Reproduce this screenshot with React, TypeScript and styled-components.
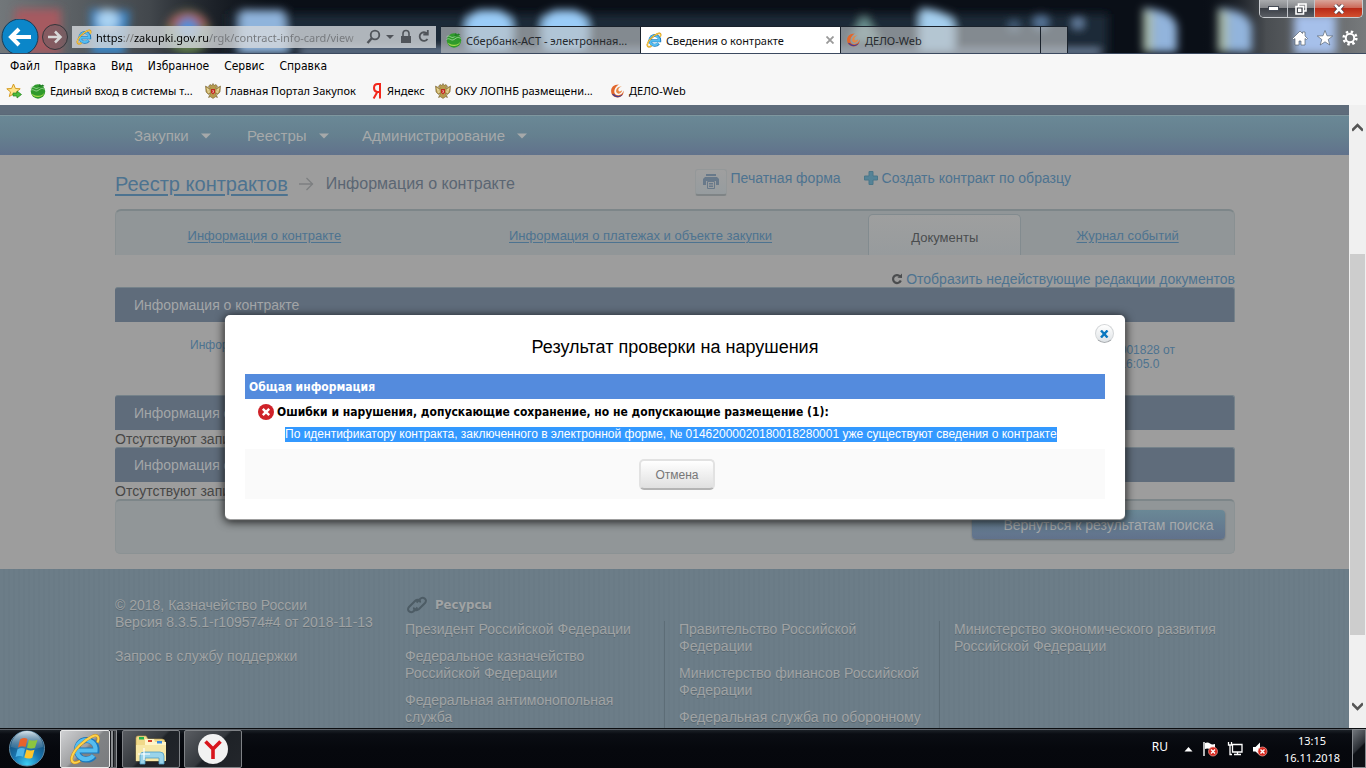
import React from "react";
import styled, { createGlobalStyle } from "styled-components";

const ui = `"Noto Sans", "Open Sans", sans-serif`;
const page = `"Liberation Sans", Arial, sans-serif`;
const bold = `"DejaVu Sans Condensed", "DejaVu Sans", sans-serif`;
const link = "#4d7390";

const Global = createGlobalStyle`
  *, *::before, *::after { box-sizing: border-box; }
  body { margin: 0; overflow: hidden; }
  button { font-family: inherit; border: 0; padding: 0; background: none; cursor: pointer; }
  svg { display: block; flex: none; }
  h1, h2, h3, p, ul { margin: 0; padding: 0; font-weight: normal; list-style: none; }
`;

const Desktop = styled.div`
  height: 100vh;
  display: flex;
  flex-direction: column;
  overflow: hidden;
  font-family: ${ui};
`;

/* ---------- browser frame ---------- */
const TitleBar = styled.header`
  position: relative;
  height: 54px;
  flex: none;
  display: flex;
  align-items: flex-end;
  background: #0a0f17;
  border-bottom: 1px solid #3c4a60;
  overflow: hidden;
`;
const Wallpaper = styled.svg`
  position: absolute;
  inset: 0;
  width: 100%;
  height: 54px;
`;
const NavButtons = styled.div`
  position: relative;
  display: flex;
  align-items: center;
  gap: 2px;
  width: 72px;
  height: 34px;
  padding-left: 1px;
`;
const AddressBar = styled.div`
  position: relative;
  display: flex;
  align-items: center;
  gap: 4px;
  width: 364px;
  height: 22px;
  margin: 0 5px 5px 0;
  padding: 0 4px;
  background: rgba(212, 216, 220, 0.8);
  color: #50545a;
`;
const Url = styled.input`
  flex: 1;
  min-width: 0;
  height: 20px;
  padding: 0;
  border: 0;
  outline: 0;
  font: 11px ${ui};
  color: transparent;
  background: linear-gradient(90deg, #000 27px, #777 27px 38px, #000 38px 112px, #74777b 112px 250px, #a0a3a6 270px);
  background-clip: text;
  -webkit-background-clip: text;
`;
const TabStrip = styled.div`
  position: relative;
  display: flex;
  height: 27px;
  flex: 1;
`;
const BrowserTab = styled.button<{ $active?: boolean }>`
  display: flex;
  align-items: center;
  gap: 4px;
  width: 200px;
  height: 27px;
  padding: 0 6px 0 5px;
  font: 11px ${ui};
  white-space: nowrap;
  text-align: left;
  color: ${(p) => (p.$active ? "#111" : "#26292d")};
  background: ${(p) => (p.$active ? "#fff" : "rgba(190, 192, 194, 0.64)")};
  border: 1px solid #1a222c;
  border-width: 1px 1px 0 0;
`;
const TabText = styled.span`
  flex: 1;
`;
const NewTab = styled.button`
  width: 27px;
  height: 27px;
  background: rgba(190, 192, 194, 0.64);
  border: 1px solid #1a222c;
  border-width: 1px 1px 0 0;
`;
const WindowSide = styled.div`
  position: relative;
  align-self: stretch;
  display: flex;
  flex-direction: column;
  align-items: flex-end;
  gap: 12px;
`;
const WindowButtons = styled.div`
  display: flex;
  height: 18px;
  margin-right: 3px;
  border: 1px solid #c9ccd0;
  border-top: 0;
  border-radius: 0 0 5px 5px;
  overflow: hidden;
`;
const WindowButton = styled.button<{ $close?: boolean }>`
  display: grid;
  place-items: center;
  width: ${(p) => (p.$close ? 48 : 27)}px;
  height: 17px;
  background: ${(p) =>
    p.$close
      ? "linear-gradient(#d9a59a, #cc6a5a 45%, #b92a17 50%, #d2502f)"
      : "linear-gradient(#a9abae, #85878b 45%, #3b3f46 50%, #5a5e64)"};
  & + & { border-left: 1px solid #c0c3c8; }
`;
const Tools = styled.div`
  display: flex;
  gap: 9px;
  margin-right: 8px;
`;

const MenuBar = styled.nav`
  display: flex;
  align-items: center;
  height: 24px;
  flex: none;
  padding-left: 10px;
  gap: 15px;
  background: #f7f7f7;
`;
const MenuItem = styled.button`
  font: 12px ${bold};
  color: #000;
`;
const Favorites = styled.nav`
  display: flex;
  align-items: center;
  height: 27px;
  flex: none;
  padding: 0 0 2px 6px;
  gap: 8px;
  background: #f7f7f7;
`;
const Favorite = styled.a<{ $width: number }>`
  display: flex;
  align-items: center;
  gap: 4px;
  width: ${(p) => p.$width}px;
  font: 11px ${ui};
  color: #000;
  text-decoration: none;
  white-space: nowrap;
`;

/* ---------- web page ---------- */
const Viewport = styled.main`
  position: relative;
  flex: 1;
  min-height: 0;
  display: flex;
`;
const Page = styled.div`
  flex: 1;
  min-width: 0;
  overflow: hidden;
  background: #9d9d9d;
  font-family: ${page};
`;
const Inner = styled.div`
  width: 83%;
  min-width: 1120px;
  max-width: 1120px;
  margin: 0 auto;
`;
const Shell = styled.div`
  padding-left: 1px;
`;
const TopStrip = styled.div`
  height: 10px;
  background: #5e6c7b;
  border-bottom: 1px solid #5a6878;
`;
const SiteNav = styled.nav`
  height: 40px;
  padding-left: 1px;
  background: linear-gradient(#6a8896, #65808f 50%, #61728c);
  border-top: 1px solid #7f979f;
`;
const NavList = styled.ul`
  display: flex;
  align-items: center;
  height: 39px;
  padding-left: 19px;
`;
const NavItem = styled.button<{ $width: number }>`
  display: flex;
  align-items: center;
  gap: 12px;
  width: ${(p) => p.$width}px;
  font: 15px ${page};
  color: #a6a9aa;
  text-align: left;
`;
const Crumbs = styled.div`
  display: flex;
  align-items: center;
  height: 54px;
  padding-top: 4px;
`;
const CrumbLink = styled.a`
  font-size: 20px;
  color: ${link};
  text-underline-offset: 3px;
`;
const CrumbHere = styled.h1`
  flex: 1;
  font-size: 16px;
  color: #5b6673;
`;
const CrumbArrow = styled.div`
  padding: 0 12px 0 11px;
`;
const PageAction = styled.a`
  display: flex;
  align-items: center;
  gap: 4px;
  height: 26px;
  margin-bottom: 12px;
  font-size: 14px;
  color: ${link};
  text-decoration: none;
`;
const PrintBox = styled.span`
  display: grid;
  place-items: center;
  width: 32px;
  height: 27px;
  margin: 8px 0 0;
  border: 1px solid #949899;
  border-bottom: 2px solid #7f8486;
  border-radius: 3px;
  background: linear-gradient(#9f9f9f, #969c9f);
`;
const PageActions = styled.div`
  display: flex;
  gap: 23px;
  margin-right: 164px;
`;
const Tabs = styled.nav`
  display: flex;
  align-items: flex-end;
  height: 46px;
  background: #919698;
  border-top: 2px solid #7d8689;
  border-left: 1px solid #899092;
  border-right: 1px solid #899092;
  border-radius: 6px 6px 0 0;
`;
const PageTab = styled.a<{ $grow: number; $active?: boolean }>`
  flex: ${(p) => p.$grow} 1 0;
  height: ${(p) => (p.$active ? 41 : 39)}px;
  display: flex;
  align-items: center;
  justify-content: center;
  padding-top: ${(p) => (p.$active ? 4 : 0)}px;
  font-size: 13px;
  color: ${(p) => (p.$active ? "#4a4d4f" : link)};
  text-decoration: ${(p) => (p.$active ? "none" : "underline")};
  text-underline-offset: 2px;
  background: ${(p) => (p.$active ? "linear-gradient(#9e9f9f, #979b9d)" : "none")};
  border: ${(p) => (p.$active ? "1px solid #828b8f" : "0")};
  border-bottom: 0;
  border-radius: 5px 5px 0 0;
`;
const Refresh = styled.a`
  display: flex;
  align-items: center;
  justify-content: flex-end;
  gap: 3px;
  height: 32px;
  padding-top: 16px;
  font-size: 14px;
  color: ${link};
  text-decoration: none;
`;
const Section = styled.h2`
  display: flex;
  align-items: center;
  height: 35px;
  padding-left: 19px;
  font-size: 14px;
  color: #a3a6a8;
  background: #5f6c7b;
  border-top: 1px solid #75828a;
  border-right: 1px solid #75828a;
  border-radius: 3px 3px 0 0;
`;
const InfoRow = styled.div`
  display: flex;
  justify-content: space-between;
  height: 73px;
  padding: 15px 60px 0 75px;
  font-size: 12px;
  line-height: 16px;
`;
const InfoLink = styled.a`
  color: ${link};
  text-decoration: none;
`;
const InfoValue = styled(InfoLink)`
  padding-top: 6px;
  line-height: 14px;
`;
const Empty = styled.p`
  height: 17px;
  line-height: 19px;
  font-size: 14px;
  color: #474747;
`;
const ActionPanel = styled.div`
  display: flex;
  justify-content: flex-end;
  height: 55px;
  padding: 9px 9px 0 0;
  background: #919698;
  border: 1px solid #8b9294;
  border-top: 2px solid #7d8689;
  border-radius: 5px;
`;
const BackButton = styled.button`
  width: 253px;
  height: 29px;
  padding-left: 20px;
  border-radius: 4px;
  font: 14px ${page};
  color: #a6a9aa;
  background: linear-gradient(#6a8896, #61728c);
  box-shadow: 0 1px 2px #5c666c;
`;
const Footer = styled.footer`
  margin-top: 15px;
  min-height: 159px;
  padding: 27px 0 0 1px;
  background: repeating-linear-gradient(90deg, #6c7d88 0 3px, #6a7b86 3px 5px);
  font-size: 14px;
  line-height: 17px;
  color: #a0a3a4;
  text-shadow: 0 1px 0 #596871;
`;
const FooterCols = styled.div`
  display: grid;
  grid-template-columns: 290px 1fr;
`;
const FootLink = styled.a`
  display: block;
  color: inherit;
  text-decoration: none;
  margin-bottom: 10px;
`;
const Copyright = styled.p`
  padding-top: 1px;
  margin-bottom: 17px;
`;
const Resources = styled.div`
  display: grid;
  grid-template-columns: 259px 275px 1fr;
`;
const ResourcesTitle = styled.h3`
  grid-column: 1 / 4;
  display: flex;
  align-items: center;
  gap: 6px;
  height: 17px;
  margin-bottom: 8px;
  font: bold 13px ${bold};
`;
const FootColumn = styled.div<{ $line?: boolean }>`
  height: 107px;
  padding: 0 8px 0 ${(p) => (p.$line ? 14 : 0)}px;
  border-left: ${(p) => (p.$line ? "1px solid #5d6d77" : "0")};
`;

/* ---------- dialog ---------- */
const DialogLayer = styled.div`
  position: absolute;
  inset: 0 17px 0 0;
  display: flex;
  justify-content: center;
  align-items: flex-start;
  padding: 210px 0 0 1px;
`;
const Dialog = styled.section`
  position: relative;
  width: 900px;
  padding: 19px 20px 20px;
  border-radius: 5px;
  background: #fff;
  box-shadow: 0 1px 1px #aaa, 0 2px 10px 1px rgba(0, 0, 0, 0.8);
  font-family: ${page};
`;
const DialogClose = styled.button`
  position: absolute;
  top: 9px;
  right: 11px;
  display: grid;
  place-items: center;
  width: 19px;
  height: 19px;
  border-radius: 50%;
  background: linear-gradient(#fff, #dfe3e6);
  border: 1px solid #d3d6d8;
  border-bottom-color: #a9adb0;
`;
const DialogTitle = styled.h2`
  height: 40px;
  line-height: 26px;
  font-size: 18px;
  text-align: center;
  color: #000;
`;
const DialogHead = styled.h3`
  height: 25px;
  padding-left: 4px;
  font: bold 12px/26px ${bold};
  color: #fff;
  background: #548bdd;
`;
const ErrorTitle = styled.p`
  display: flex;
  align-items: center;
  gap: 3px;
  height: 26px;
  padding-left: 13px;
  font: bold 12px ${bold};
`;
const ErrorText = styled.p`
  height: 24px;
  padding: 2px 0 0 40px;
  font-size: 12px;
  line-height: 15px;
`;
const Selected = styled.mark`
  display: inline-block;
  color: #fff;
  background: #39f;
`;
const DialogFoot = styled.div`
  display: flex;
  justify-content: center;
  height: 50px;
  padding: 10px 0 0 4px;
  background: #fafafa;
`;
const Cancel = styled.button`
  width: 76px;
  height: 31px;
  font-size: 12px;
  color: #777;
  border: 2px solid #e2e2e2;
  border-bottom-color: #b4b4b4;
  border-radius: 5px;
  background: linear-gradient(#fff, #e0e0e0);
`;

/* ---------- scrollbar ---------- */
const Scrollbar = styled.div`
  display: flex;
  flex-direction: column;
  align-items: center;
  width: 17px;
  flex: none;
  background: #f0f0f0;
`;
const ScrollArrow = styled.button`
  display: grid;
  place-items: center;
  width: 17px;
  height: 44px;
`;
const ScrollGap = styled.div<{ $grow: number }>`
  flex: ${(p) => p.$grow} 1 0;
`;
const ScrollThumb = styled.div`
  flex: 381 1 0;
  width: 15px;
  background: #cdcdcd;
`;

/* ---------- taskbar ---------- */
const Taskbar = styled.footer`
  display: flex;
  align-items: center;
  height: 40px;
  flex: none;
  background: linear-gradient(#5a5f66 1px, #1c2127 1px, #0a0d13 5px, #06080d 20px, #05070c);
  border-top: 1px solid #0b0d10;
`;
const Start = styled.button`
  width: 36px;
  height: 37px;
  margin: 0 15px 0 9px;
`;
const TaskButton = styled.button<{ $active?: boolean; $width: number }>`
  display: grid;
  place-items: center;
  width: ${(p) => p.$width}px;
  height: 38px;
  border: 1px solid ${(p) => (p.$active ? "#e8e8e8" : "#7f8286")};
  border-radius: 2px;
  background: ${(p) =>
    p.$active ? "linear-gradient(135deg, #cfd0d2, #a0a1a3 48%, #818385 52%, #7a7c7f)" : "linear-gradient(135deg, #5a5d62, #34383d 48%, #1e2227 52%, #23262b)"};
`;
const Stack = styled.div`
  width: 7px;
  height: 38px;
  margin-right: 5px;
  border: solid #6b6e72;
  border-width: 1px 1px 1px 0;
  border-right-color: #8c8f93;
  background: linear-gradient(90deg, #17191d 1px, #8b8e91 1px 3px, #15181c 3px 4px, #3f4246 4px);
`;
const TaskList = styled.div`
  flex: 1;
  display: flex;
`;
const TaskGroup = styled.div`
  display: flex;
  gap: 4px;
`;
const Language = styled.span`
  margin: 0 15px 5px 0;
  font: 12px ${ui};
  color: #fff;
`;
const Tray = styled.div`
  display: flex;
  align-items: center;
  gap: 9px;
  padding-left: 1px;
`;
const Clock = styled.time`
  width: 70px;
  margin: 0 5px 0 9px;
  font: 11px/17px ${ui};
  text-align: center;
  color: #fff;
`;
const ShowDesktop = styled.button`
  width: 14px;
  height: 39px;
  border: 1px solid #85898e;
  background: linear-gradient(135deg, #70757b, #2a2e34 48%, #0d1015 52%);
`;

/* ---------- icons ---------- */
const IeIcon = ({ size = 16 }: { size?: number }) => (
  <svg width={size} height={size} viewBox="0 0 32 32" fill="none">
    <path d="M8.500 17.500h19a9.800 9.800 0 1 0-2.200 5.500" stroke="#1b78bd" strokeWidth="6" />
    <path d="M9 17.500h17.500a9.500 9.500 0 1 0-2 5" stroke="#55bdf0" strokeWidth="4.200" />
    <path d="M28.500 9.500c2-5 .5-9-5.500-6C14.500 7.500 4.500 17 2.800 24.500c-1 5.500 3 6.500 8.200 3.500" stroke="#c98a14" strokeWidth="3" />
    <path d="M28.500 9.500c2-5 .5-9-5.500-6C14.500 7.500 4.500 17 2.800 24.500c-1 5.500 3 6.500 8.200 3.500" stroke="#fdd34c" strokeWidth="2" />
  </svg>
);
const SberIcon = () => (
  <svg width="16" height="16" viewBox="0 0 16 16">
    <circle cx="8" cy="8.500" r="7.200" fill="#2f9a2c" />
    <path d="M1.500 10.500a6.800 5.800 0 0 0 13-1.500c-1 2.500-3 3.800-5.500 3.800S4.500 12.500 1.500 10.500z" fill="#a4d84a" />
    <path d="M.5 5c3-3 4.500 2 7.500 0s3.500-3 6-1.500M.5 7.500c3-2.500 4.500 2 7.500 0s4-3 6.500-1" fill="none" stroke="#a9dba2" strokeWidth=".8" />
    <path d="M9.500 1L8 4.500 14.500 3l-2-1.500-1.500 1z" fill="#1f7d24" />
  </svg>
);
const EagleIcon = () => (
  <svg width="16" height="16" viewBox="0 0 16 16">
    <path d="M8 .5l1 2L11 1.500l1.500 2-1.500 1v1L15.500 3 15 9l-2.500 2.500L10.500 10l2 4.500-2-.7L8 15.500l-2.500-1.700-2 .7 2-4.500-2 1.500L1 9 .5 3 5 5.500v-1l-1.500-1L5 1.500l2 1z" fill="#b59a4e" stroke="#6b5522" strokeWidth=".5" />
    <path d="M2 5l1.500 5M14 5l-1.500 5M3.500 6l1 3.500M12.500 6l-1 3.500" stroke="#f0e2a8" strokeWidth=".9" />
    <path d="M6 6h4v3.500L8 11.500 6 9.500z" fill="#c3271f" />
    <path d="M7.500 7l1 1-.7 2" stroke="#fff" strokeWidth=".7" fill="none" />
  </svg>
);
const YaIcon = () => (
  <svg width="12" height="16" viewBox="0 0 12 16">
    <path d="M9 15.500V1H6.800C4.200 1 3 2.700 3 5c0 2.200 1.200 3.700 3.400 3.900H9M6.300 9L2.600 15.500" fill="none" stroke="#f2271c" strokeWidth="2" />
  </svg>
);
const DeloIcon = () => (
  <svg width="15" height="16" viewBox="0 0 16 16">
    <path d="M9.500 1C3.500 1 1 4.500 1.200 8.500c.2 4 3.300 6.500 7.300 6.300 4-.2 6.500-3.500 6-7.300-.6 3-3 5.200-6 5C5.500 12.400 4 10 4.800 7 5.500 4 7.500 2.500 9.500 1z" fill="#e2672c" />
    <path d="M2 11c2 4 8.500 5.500 12 .3-3 2.500-7.500 2.500-9.500.2z" fill="#493d8f" />
    <path d="M6.500 7.500C7 4.500 9.500 3 12.500 3.200 9.500 4 8.500 6 9 7.500c.5 1.600 3 1.200 4-.5-.2 2.500-2 4-4 3.800-1.700-.2-2.700-1.500-2.500-3.300z" fill="#e88742" />
  </svg>
);
const Badge = ({ x }: { x: number }) => (
  <g>
    <circle cx={x} cy="10.500" r="4.500" fill="#d8281e" stroke="#f3a59f" strokeWidth=".7" />
    <path d={`M${x - 2} 8.500l4 4m0-4l-4 4`} stroke="#fff" strokeWidth="1.400" />
  </g>
);
const Caret = () => (
  <svg width="10" height="6" viewBox="0 0 10 6"><path d="M0 0.500h10L5 5.500z" fill="#a6a9aa" /></svg>
);

const NAV = [["Закупки", 113], ["Реестры", 115], ["Администрирование", 180]] as const;
const MENU = ["Файл", "Правка", "Вид", "Избранное", "Сервис", "Справка"];
const FAVORITES = [
  ["Единый вход в системы т...", 167, SberIcon],
  ["Главная Портал Закупок", 158, EagleIcon],
  ["Яндекс", 56, YaIcon],
  ["ОКУ ЛОПНБ размещени...", 167, EagleIcon],
  ["ДЕЛО-Web", 80, DeloIcon],
] as const;

export default function App() {
  return (
    <Desktop>
      <Global />
      <TitleBar>
        <Wallpaper viewBox="0 0 1366 54" preserveAspectRatio="none" aria-hidden="true">
          <defs>
            <filter id="soft" x="-20%" y="-20%" width="140%" height="140%"><feGaussianBlur stdDeviation="4" /></filter>
            <linearGradient id="left"><stop offset="0" stopColor="#72777a" /><stop offset=".5" stopColor="#42474c" /><stop offset="1" stopColor="#0a0f17" stopOpacity="0" /></linearGradient>
            <linearGradient id="right"><stop offset="0" stopColor="#0a0f17" stopOpacity="0" /><stop offset=".4" stopColor="#4a4e52" /><stop offset="1" stopColor="#777a7c" /></linearGradient>
          </defs>
          <rect width="300" height="54" fill="url(#left)" />
          <rect x="1200" width="166" height="54" fill="url(#right)" />
          <g filter="url(#soft)">
            <rect x="228" y="14" width="880" height="40" fill="#1f2b38" />
            <rect x="15" y="9" width="46" height="45" fill="#a65a60" />
            <path d="M90 9l40 2-6 44H92z" fill="#3d86c4" />
            <circle cx="108" cy="20" r="11" fill="#a9d2f2" />
            <circle cx="188" cy="32" r="22" fill="#5f7c4c" />
            <path d="M167 26a22 19 0 0 1 42 0z" fill="#a8575c" />
            <circle cx="188" cy="28" r="10" fill="#4f8fd8" />
            <path d="M240 10h44l4 44h-48z" fill="#8fb4dc" />
            <rect x="466" y="10" width="46" height="44" rx="16" fill="#9accf8" />
            <rect x="542" y="10" width="46" height="44" rx="16" fill="#9accf8" />
            <path d="M850 42l14-28 16 28z" fill="#6e9594" />
            <path d="M920 8q32 2 34 18v28h-34z" fill="#a5cfef" />
            <circle cx="1014" cy="26" r="5" fill="#4b6887" /><circle cx="1041" cy="22" r="7" fill="#5c7ca0" /><circle cx="1078" cy="23" r="5" fill="#7593b8" />
            <rect x="300" y="50" width="800" height="6" fill="#7a90ad" />
            <path d="M1143 8q30 2 34 18v26h-34z" fill="#92b4dc" /><path d="M1143 8l10 5v39h-10z" fill="#a5b8a8" />
            <path d="M1218 8q30 2 34 18v26h-34z" fill="#92b4dc" /><path d="M1218 8l10 5v39h-10z" fill="#a5b8a8" />
            <rect x="1294" y="14" width="42" height="40" fill="#a6c0ea" />
          </g>
        </Wallpaper>
        <NavButtons>
          <button aria-label="Назад">
            <svg width="38" height="34" viewBox="0 0 38 34">
              <circle cx="19" cy="18" r="18" fill="#0b86c9" stroke="#173c56" />
              <path d="M30 18H10m8-8l-8 8 8 8" fill="none" stroke="#fff" strokeWidth="4" />
            </svg>
          </button>
          <button aria-label="Вперёд">
            <svg width="28" height="34" viewBox="0 0 28 34">
              <circle cx="14" cy="18" r="12.500" fill="#7a5c62" fillOpacity=".75" stroke="#33363b" />
              <path d="M7 18h12m-5-5.500l5.500 5.500-5.500 5.500" fill="none" stroke="#d8d8d8" strokeWidth="2.500" />
            </svg>
          </button>
        </NavButtons>
        <AddressBar>
          <IeIcon />
          <Url aria-label="Адрес" defaultValue="https://zakupki.gov.ru/rgk/contract-info-card/view" />
          <svg width="66" height="16" viewBox="0 0 66 16" fill="none" stroke="#50545a">
            <circle cx="9" cy="6" r="4.300" strokeWidth="1.800" /><path d="M6 9l-4.500 5" strokeWidth="2.400" />
            <path d="M20 6h8l-4 4z" fill="#50545a" stroke="none" />
            <path d="M35 7h10v7H35z" fill="#50545a" stroke="none" /><path d="M37 7V4.500a3 3 0 0 1 6 0V7" strokeWidth="1.600" />
            <path d="M61 4.500A4.300 4.300 0 1 0 61.500 10M61.800 1v4.500h-4.500" strokeWidth="1.800" />
          </svg>
        </AddressBar>
        <TabStrip>
          <BrowserTab><SberIcon /><TabText>Сбербанк-АСТ - электронная...</TabText></BrowserTab>
          <BrowserTab $active>
            <IeIcon /><TabText>Сведения о контракте</TabText>
            <svg width="8" height="8" viewBox="0 0 8 8"><path d="M.5.5l7 7m0-7l-7 7" stroke="#999" strokeWidth="1.800" /></svg>
          </BrowserTab>
          <BrowserTab><DeloIcon /><TabText>ДЕЛО-Web</TabText></BrowserTab>
          <NewTab aria-label="Новая вкладка" />
        </TabStrip>
        <WindowSide>
          <WindowButtons>
            <WindowButton aria-label="Свернуть"><svg width="11" height="5" viewBox="0 0 11 5"><rect x=".5" y=".5" width="10" height="4" fill="#fff" stroke="#444a55" /></svg></WindowButton>
            <WindowButton aria-label="Развернуть"><svg width="12" height="12" viewBox="0 0 12 12" fill="none" stroke="#fff" strokeWidth="1.600"><path d="M3.500 3V1H11v7H9" /><path d="M1 3.500h7.500V11H1z" /><path d="M3.800 6.300h1.800v1.800H3.800z" /></svg></WindowButton>
            <WindowButton $close aria-label="Закрыть окно"><svg width="12" height="10" viewBox="0 0 12 10"><path d="M2 .8l8 8.400M10 .8L2 9.200" stroke="#4a3540" strokeWidth="4" /><path d="M2 .8l8 8.400M10 .8L2 9.200" stroke="#fff" strokeWidth="2.600" /></svg></WindowButton>
          </WindowButtons>
          <Tools>
            <button aria-label="Домой"><svg width="16" height="16" viewBox="0 0 16 16"><path d="M8 1L.5 8.500l1 1L3 8.500V15h4v-4h2v4h4V8.500l1.500 1 1-1L13 6V2h-2.500v1.500z" fill="#fff" stroke="#46505c" strokeWidth=".6" /></svg></button>
            <button aria-label="Избранное"><svg width="16" height="16" viewBox="0 0 16 16"><path d="M8 .5l2 5.300 5.700.2-4.500 3.500 1.600 5.500L8 11.800 3.200 15l1.600-5.500L.3 6 6 5.800z" fill="#fff" stroke="#46505c" strokeWidth=".6" /></svg></button>
            <button aria-label="Сервис"><svg width="16" height="16" viewBox="0 0 16 16" fill="none" stroke="#fff"><circle cx="8" cy="8" r="6.300" strokeWidth="2.600" strokeDasharray="2.400 2.548" /><circle cx="8" cy="8" r="4.200" strokeWidth="2" /></svg></button>
          </Tools>
        </WindowSide>
      </TitleBar>

      <MenuBar>{MENU.map((m) => <MenuItem key={m}>{m}</MenuItem>)}</MenuBar>
      <Favorites>
        <button aria-label="Добавить в избранное">
          <svg width="16" height="16" viewBox="0 0 16 16"><path d="M7.500 1l1.900 4.500 4.800.3-3.700 3.100 1.200 4.600-4.200-2.600-4.200 2.600 1.200-4.600L.8 5.800l4.800-.3z" fill="#ffe48a" stroke="#d49a20" /><path d="M7 10h4V8l4.500 3.500L11 15v-2H7z" fill="#4cbb3c" stroke="#22831c" strokeWidth=".7" /></svg>
        </button>
        {FAVORITES.map(([name, width, Icon]) => (
          <Favorite key={name} href="#" $width={width}><Icon />{name}</Favorite>
        ))}
      </Favorites>

      <Viewport>
        <Page>
          <TopStrip />
          <SiteNav>
            <Inner>
              <NavList>
                {NAV.map(([name, width]) => (
                  <li key={name}><NavItem $width={width}>{name}<Caret /></NavItem></li>
                ))}
              </NavList>
            </Inner>
          </SiteNav>
          <Shell>
            <Inner>
              <Crumbs>
                <CrumbLink href="#">Реестр контрактов</CrumbLink>
                <CrumbArrow><svg width="15" height="14" viewBox="0 0 15 14"><path d="M0 7h14M7.500 1l6 6-6 6" fill="none" stroke="#7d7f81" strokeWidth="1.300" /></svg></CrumbArrow>
                <CrumbHere>Информация о контракте</CrumbHere>
                <PageActions>
                  <PageAction href="#">
                    <PrintBox><svg width="16" height="15" viewBox="0 0 16 15"><path d="M3 0h10v2H3zM2 3h12l2 2v6h-3V7H3v4H0V5z" fill="#68798a" /><path d="M4.500 7.500h7v7h-7zM6 9.500h4M6 11h4M6 12.500h4" fill="none" stroke="#68798a" /></svg></PrintBox>
                    Печатная форма
                  </PageAction>
                  <PageAction href="#">
                    <svg width="14" height="14" viewBox="0 0 14 14"><path d="M5 .5h4V5h4.500v4H9v4.500H5V9H.5V5H5z" fill="#558397" stroke="#4b7789" /></svg>
                    Создать контракт по образцу
                  </PageAction>
                </PageActions>
              </Crumbs>
              <Tabs>
                <PageTab href="#" $grow={297}>Информация о контракте</PageTab>
                <PageTab href="#" $grow={456}>Информация о платежах и объекте закупки</PageTab>
                <PageTab href="#" $grow={151} $active>Документы</PageTab>
                <PageTab href="#" $grow={213}>Журнал событий</PageTab>
              </Tabs>
              <Refresh href="#">
                <svg width="12" height="12" viewBox="0 0 12 12"><path d="M9 3.300A4 4 0 1 0 9.800 7.500" fill="none" stroke="#4b4d4f" strokeWidth="2.200" /><path d="M6.500 4.800L11 5V.500z" fill="#4b4d4f" /></svg>
                Отобразить недействующие редакции документов
              </Refresh>
              <Section>Информация о контракте</Section>
              <InfoRow>
                <InfoLink href="#">Информация</InfoLink>
                <InfoValue href="#">№ 01828001828 от<br />16.11.18 16:05.0</InfoValue>
              </InfoRow>
              <Section>Информация о</Section>
              <Empty>Отсутствуют записи</Empty>
              <Section>Информация о</Section>
              <Empty>Отсутствуют записи</Empty>
              <ActionPanel><BackButton>Вернуться к результатам поиска</BackButton></ActionPanel>
            </Inner>
          </Shell>
          <Footer>
            <Inner>
              <FooterCols>
                <div>
                  <Copyright>© 2018, Казначейство России<br />Версия 8.3.5.1-r109574#4 от 2018-11-13</Copyright>
                  <FootLink href="#">Запрос в службу поддержки</FootLink>
                </div>
                <Resources>
                  <ResourcesTitle>
                    <svg width="24" height="18" viewBox="0 0 24 18" fill="none" stroke="#4d5c65" strokeWidth="2"><path d="M12.500 11.500l-3.300 3.300c-3.300 3.200-8.200-.3-5.200-3.800l6-6c2.500-2.300 5.500-1 5 1.500" /><path d="M11.500 6.500l3.300-3.300c3.300-3.200 8.200.3 5.200 3.800l-6 6c-2.500 2.300-5.500 1-5-1.500" /></svg>
                    Ресурсы
                  </ResourcesTitle>
                  <FootColumn>
                    <FootLink href="#">Президент Российской Федерации</FootLink>
                    <FootLink href="#">Федеральное казначейство Российской Федерации</FootLink>
                    <FootLink href="#">Федеральная антимонопольная служба</FootLink>
                  </FootColumn>
                  <FootColumn $line>
                    <FootLink href="#">Правительство Российской Федерации</FootLink>
                    <FootLink href="#">Министерство финансов Российской Федерации</FootLink>
                    <FootLink href="#">Федеральная служба по оборонному</FootLink>
                  </FootColumn>
                  <FootColumn $line>
                    <FootLink href="#">Министерство экономического развития Российской Федерации</FootLink>
                  </FootColumn>
                </Resources>
              </FooterCols>
            </Inner>
          </Footer>
        </Page>
        <Scrollbar>
          <ScrollArrow aria-label="Вверх"><svg width="11" height="9" viewBox="0 0 11 9"><path d="M0 7.500L5.500 2 11 7.500" fill="none" stroke="#555" strokeWidth="2.600" /></svg></ScrollArrow>
          <ScrollGap $grow={105} />
          <ScrollThumb />
          <ScrollGap $grow={49} />
          <ScrollArrow aria-label="Вниз"><svg width="11" height="9" viewBox="0 0 11 9"><path d="M0 1.500L5.500 7 11 1.500" fill="none" stroke="#555" strokeWidth="2.600" /></svg></ScrollArrow>
        </Scrollbar>
        <DialogLayer>
          <Dialog role="dialog" aria-labelledby="dialog-title">
            <DialogClose aria-label="Закрыть"><svg width="9" height="8" viewBox="0 0 9 8"><path d="M1 .5l6.500 7M7.500.5L1 7.500" stroke="#0b78c0" strokeWidth="2.400" /></svg></DialogClose>
            <DialogTitle id="dialog-title">Результат проверки на нарушения</DialogTitle>
            <DialogHead>Общая информация</DialogHead>
            <ErrorTitle>
              <svg width="16" height="16" viewBox="0 0 16 16"><circle cx="8" cy="8" r="8" fill="#cf2229" /><path d="M4.800 4.800l6.400 6.400m0-6.400l-6.400 6.400" stroke="#fff" strokeWidth="2.400" /></svg>
              Ошибки и нарушения, допускающие сохранение, но не допускающие размещение (1):
            </ErrorTitle>
            <ErrorText><Selected>По идентификатору контракта, заключенного в электронной форме, № 01462000020180018280001 уже существуют сведения о контракте</Selected></ErrorText>
            <DialogFoot><Cancel>Отмена</Cancel></DialogFoot>
          </Dialog>
        </DialogLayer>
      </Viewport>

      <Taskbar>
        <Start aria-label="Пуск">
          <svg width="36" height="37" viewBox="0 0 36 37">
            <defs>
              <radialGradient id="orb" cx=".5" cy=".95" r=".95"><stop offset="0" stopColor="#3cd0f5" /><stop offset=".4" stopColor="#1a78b4" /><stop offset="1" stopColor="#123a5c" /></radialGradient>
              <linearGradient id="shine" x2="0" y2="1"><stop offset="0" stopColor="#d8e6ee" /><stop offset="1" stopColor="#5b8aa8" stopOpacity=".3" /></linearGradient>
            </defs>
            <circle cx="18" cy="18.500" r="17.500" fill="url(#orb)" stroke="#5f8ba6" />
            <path d="M2 17a16 16 0 0 1 32 0q-16 5-32 0z" fill="url(#shine)" />
            <path d="M11 9.500q4-2.500 7.500-.5l-2 8q-3.500-1.500-7.500.5z" fill="#e8622c" />
            <path d="M20 9.700q4 1.800 8.500 0l-2.500 8q-4 1.500-8 0z" fill="#8cc63f" />
            <path d="M8.500 19.200q4-2 7.500-.5l-2 8q-3.500-1.700-7.500.3z" fill="#4db4e8" />
            <path d="M17.500 19.500q4 1.800 8 .2l-2.200 8q-4 1.800-8-.2z" fill="#fdc52c" />
          </svg>
        </Start>
        <TaskList>
          <TaskButton $active $width={50} aria-label="Internet Explorer"><IeIcon size={32} /></TaskButton>
          <Stack />
          <TaskGroup>
            <TaskButton $width={58} aria-label="Проводник">
              <svg width="34" height="32" viewBox="0 0 34 32">
                <path d="M2 5q0-2 2-2h8l2 3h14q3 0 3 3v19H2z" fill="#f0d98a" stroke="#b89a4a" strokeWidth=".6" />
                <path d="M11 6h9l1 3h11v4H11z" fill="#fff5c8" /><path d="M2 12h30v16H2z" fill="#f7e7a6" />
                <rect x="5" y="4" width="5" height="2.500" fill="#22b14c" /><rect x="14" y="7" width="4" height="2" fill="#d8432c" /><rect x="23" y="8" width="5" height="2.500" fill="#3a8be0" />
                <path d="M6 31v-8q0-4 4-4h16q4 0 4 4v8h-5v-6H11v6z" fill="#9ad4ea" stroke="#4c9dc4" strokeWidth=".8" />
                <path d="M10 15v12M4 21h12" stroke="#fff" strokeWidth="1.200" />
              </svg>
            </TaskButton>
            <TaskButton $width={58} aria-label="Яндекс Браузер">
              <svg width="30" height="30" viewBox="0 0 30 30"><circle cx="15" cy="15" r="15" fill="#f2f2f2" /><path d="M7.500 7.500L15 15v10M22.500 7.500L15 15" fill="none" stroke="#d8151c" strokeWidth="3.600" /></svg>
            </TaskButton>
          </TaskGroup>
        </TaskList>
        <Language>RU</Language>
        <Tray>
          <svg width="9" height="6" viewBox="0 0 9 6"><path d="M0.500 5.500L4.500 1l4 4.500z" fill="#fff" /></svg>
          <svg width="16" height="16" viewBox="0 0 16 16"><path d="M2 1v14" stroke="#fff" strokeWidth="1.400" /><path d="M3 2q3-1 5 .5t5 .5v6q-3 1-5-.5T3 8z" fill="#fff" /><Badge x={11} /></svg>
          <svg width="16" height="16" viewBox="0 0 16 16" fill="none" stroke="#fff"><path d="M5.500 3.500H15v7.500H5.500z" strokeWidth="1.300" /><path d="M7 13.500h7M10.500 11v2.500M1.500 1v3h3V1M3 4v9.500h2" strokeWidth="1.300" /></svg>
          <svg width="16" height="16" viewBox="0 0 16 16"><path d="M1 6h2.500L8 1.500v13L3.500 10.500H1z" fill="#fff" /><Badge x={10.500} /></svg>
        </Tray>
        <Clock>13:15<br />16.11.2018</Clock>
        <ShowDesktop aria-label="Показать рабочий стол" />
      </Taskbar>
    </Desktop>
  );
}
